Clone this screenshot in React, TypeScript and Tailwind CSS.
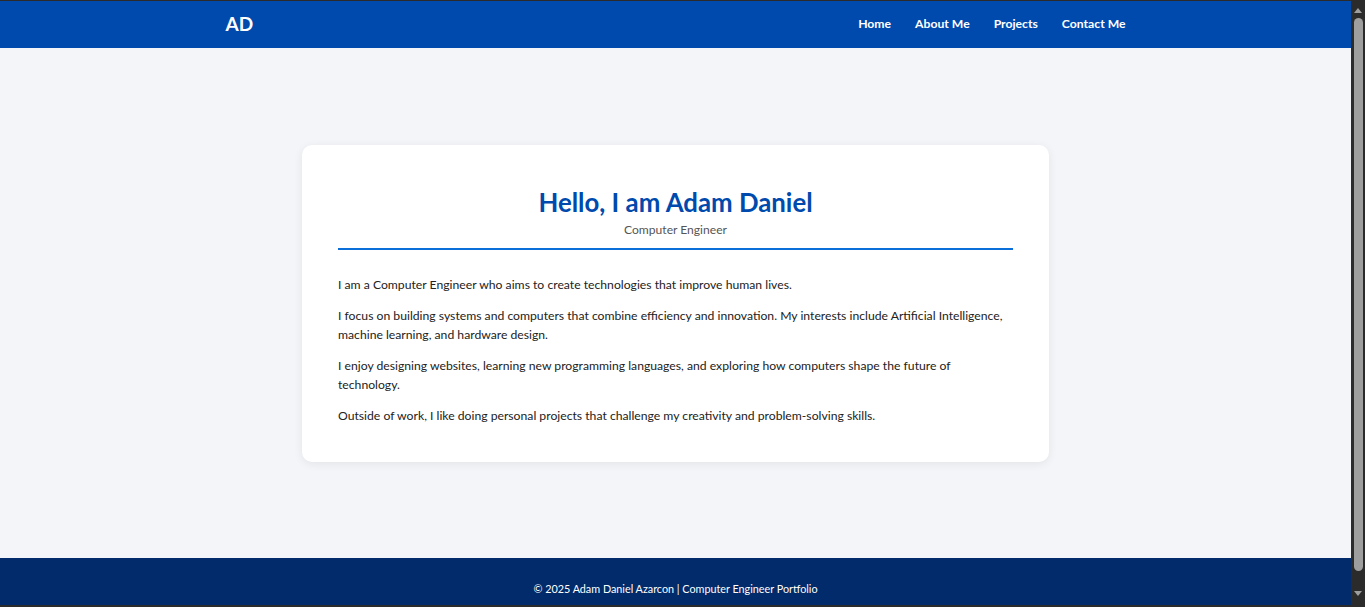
import React from "react";

const font = { fontFamily: '"Lato", "Open Sans", sans-serif' };

function FakeScrollbar() {
  return (
    <div className="w-[14px] bg-[#2b2b2b] flex flex-col items-center">
      <svg width="14" height="16" viewBox="0 0 14 16" className="shrink-0">
        <path d="M3 12 L7 7 L11 12 Z" fill="#9e9e9e" />
      </svg>
      <div className="flex-1 w-[9px] mt-[1px] mb-[16px] rounded-[5px] bg-[#9e9e9e]" />
      <svg width="14" height="16" viewBox="0 0 14 16" className="shrink-0 mb-[2px]">
        <path d="M3 4 L11 4 L7 9 Z" fill="#9e9e9e" />
      </svg>
    </div>
  );
}

export default function App() {
  return (
    <div className="h-screen flex flex-col bg-[#2b2b2b] pt-px pb-[2px]" style={font}>
      <div className="flex-1 flex min-h-0">
        <div className="flex-1 overflow-hidden bg-[#f4f5f9]">
          <header className="bg-[#004aad] h-[47px]">
            <div className="max-w-[900px] mx-auto h-full flex items-center justify-between">
              <span className="text-white font-bold text-[19px]">AD</span>
              <nav className="flex items-center gap-6 text-white font-bold text-[12.2px]">
                <a>Home</a>
                <a>About Me</a>
                <a>Projects</a>
                <a>Contact Me</a>
              </nav>
            </div>
          </header>
          <main className="h-[510px] flex items-center justify-center">
            <section className="w-[747px] bg-white rounded-[10px] shadow-[0_2px_10px_rgba(0,0,0,0.07)] px-9 pt-[41px] pb-[37px]">
              <h1 className="text-center text-[#004aad] font-bold text-[25.8px] leading-[32px]">
                Hello, I am Adam Daniel
              </h1>
              <p className="text-center text-[#555] text-[12.1px] leading-[18px] mt-[3px]">Computer Engineer</p>
              <div className="h-[2px] bg-[#0a6fd8] mt-[9px] mb-[25px]" />
              <div className="text-[#222] text-[12.2px] leading-[19px] flex flex-col gap-3">
                <p>I am a Computer Engineer who aims to create technologies that improve human lives.</p>
                <p>
                  I focus on building systems and computers that combine efficiency and innovation. My interests include Artificial Intelligence, machine learning, and hardware design.
                </p>
                <p>
                  I enjoy designing websites, learning new programming languages, and exploring how computers shape the future of technology.
                </p>
                <p>Outside of work, I like doing personal projects that challenge my creativity and problem-solving skills.</p>
              </div>
            </section>
          </main>
          <footer className="bg-[#012b6b] text-white text-center text-[10.8px] pt-[23px] pb-[25px] leading-[16px]">
            © 2025 Adam Daniel Azarcon | Computer Engineer Portfolio
          </footer>
        </div>
        <FakeScrollbar />
      </div>
    </div>
  );
}
